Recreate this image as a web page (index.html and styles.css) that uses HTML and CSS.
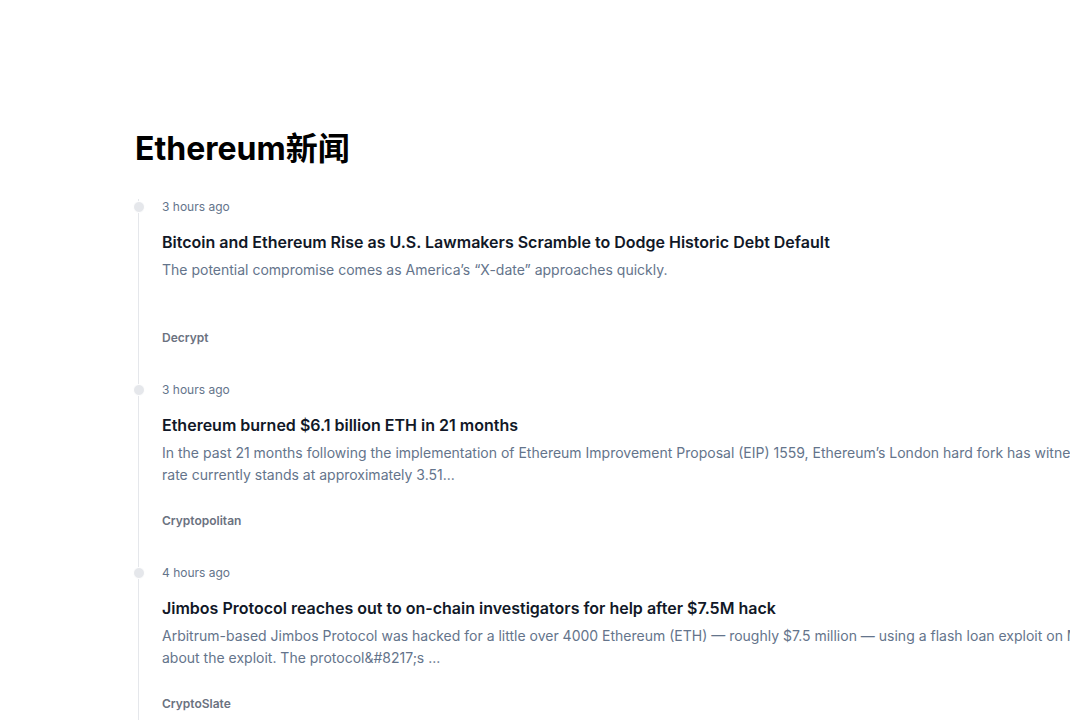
FILE: index.html
```html
<!DOCTYPE html>
<html lang="zh-CN">
<head>
  <meta charset="UTF-8" />
  <meta name="viewport" content="width=device-width, initial-scale=1.0" />
  <title>Ethereum新闻</title>
  <link rel="stylesheet" href="styles.css">
</head>
<body>

  <main class="pagina">
    <h1 class="titulo">Ethereum新闻</h1>

    <ol class="linha">
      <li class="noticia">
        <span class="ponto"></span>
        <time class="quando">3 hours ago</time>
        <h3 class="manchete">Bitcoin and Ethereum Rise as U.S. Lawmakers Scramble to Dodge Historic Debt Default</h3>
        <p class="resumo">The potential compromise comes as America’s “X-date” approaches quickly.</p>
        <span class="fonte">Decrypt</span>
      </li>

      <li class="noticia">
        <span class="ponto"></span>
        <time class="quando">3 hours ago</time>
        <h3 class="manchete">Ethereum burned $6.1 billion ETH in 21 months</h3>
        <p class="resumo">In the past 21 months following the implementation of Ethereum Improvement Proposal (EIP) 1559, Ethereum’s London hard fork has witnessed a notable reduction. The burn rate currently stands at approximately 3.51...</p>
        <span class="fonte">Cryptopolitan</span>
      </li>

      <li class="noticia">
        <span class="ponto"></span>
        <time class="quando">4 hours ago</time>
        <h3 class="manchete">Jimbos Protocol reaches out to on-chain investigators for help after $7.5M hack</h3>
        <p class="resumo">Arbitrum-based Jimbos Protocol was hacked for a little over 4000 Ethereum (ETH) — roughly $7.5 million — using a flash loan exploit on May 28. The team shared details about the exploit. The protocol&amp;#8217;s ...</p>
        <span class="fonte">CryptoSlate</span>
      </li>
    </ol>
  </main>

</body>
</html>
```

FILE: styles.css
```css
body {
  margin: 0;
  font-family: Inter, "Noto Sans CJK SC", sans-serif;
  background-color: white;
  overflow-x: hidden;
}

.pagina {
  padding: 131px 0 0 135px;
}

.titulo {
  margin: 0 0 36px;
  font-size: 32px;
  line-height: 36px;
  font-weight: 700;
  color: black;
}

.linha {
  list-style: none;
  margin: 0 0 0 3px;
  padding: 0;
  border-left: 1px solid #e5e7eb;
  width: 1174px;
}

.noticia {
  position: relative;
  padding-left: 23px;
  padding-bottom: 40px;
}

.ponto {
  position: absolute;
  left: -6.5px;
  top: 2px;
  width: 10px;
  height: 10px;
  border: 1px solid white;
  border-radius: 50%;
  background-color: #e5e7eb;
}

.quando {
  display: block;
  font-size: 12px;
  line-height: 16px;
  color: #64748b;
  margin-top: -4px;
}

.manchete {
  margin: 15px 0 0;
  font-size: 16px;
  line-height: 24px;
  font-weight: 600;
  color: #111827;
}

.resumo {
  margin: 5px 0 0;
  height: 45px;
  font-size: 14px;
  line-height: 22px;
  color: #64748b;
}

.fonte {
  display: block;
  margin-top: 26px;
  font-size: 12px;
  line-height: 16px;
  font-weight: 600;
  color: #6b7280;
}
```
